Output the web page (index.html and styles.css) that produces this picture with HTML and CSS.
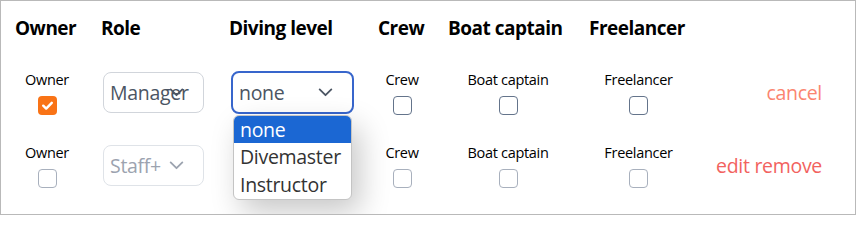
FILE: index.html
```html
<!DOCTYPE html>
<html>
<head>
<meta charset="utf-8">
<link rel="stylesheet" href="styles.css">
</head>
<body>
<div class="frame">
  <div class="grid head">
    <div class="th h1">Owner</div>
    <div class="th h2">Role</div>
    <div class="th h3">Diving level</div>
    <div class="th h4">Crew</div>
    <div class="th h5">Boat captain</div>
    <div class="th h6">Freelancer</div>
    <div></div>
  </div>

  <div class="grid row">
    <div class="stack"><span class="lbl">Owner</span><span class="cb checked"><svg viewBox="0 0 20 20" width="19" height="19"><path d="M5.5 10.2 L8.6 13.2 L14.5 7.2" fill="none" stroke="#fff" stroke-width="2.6" stroke-linecap="round" stroke-linejoin="round"/></svg></span></div>
    <div class="cell"><div class="select role"><span class="val">Manager</span><svg class="chev" viewBox="0 0 16 10" width="15" height="9"><polyline points="1.5,1.5 8,8 14.5,1.5" fill="none" stroke="#4b5563" stroke-width="2" stroke-linecap="round" stroke-linejoin="round"/></svg></div></div>
    <div class="cell">
      <div class="dd-wrap">
        <div class="select level focus"><span class="val">none</span><svg class="chev" viewBox="0 0 16 10" width="15" height="9"><polyline points="1.5,1.5 8,8 14.5,1.5" fill="none" stroke="#4b5563" stroke-width="2" stroke-linecap="round" stroke-linejoin="round"/></svg></div>
        <ul class="popup">
          <li class="opt sel">none</li>
          <li class="opt">Divemaster</li>
          <li class="opt">Instructor</li>
        </ul>
      </div>
    </div>
    <div class="stack"><span class="lbl">Crew</span><span class="cb"></span></div>
    <div class="stack"><span class="lbl">Boat captain</span><span class="cb"></span></div>
    <div class="stack"><span class="lbl">Freelancer</span><span class="cb"></span></div>
    <div class="actions"><span class="cancel">cancel</span></div>
  </div>

  <div class="grid row">
    <div class="stack"><span class="lbl">Owner</span><span class="cb dis"></span></div>
    <div class="cell"><div class="select role disabled"><span class="val">Staff+</span><svg class="chev" viewBox="0 0 16 10" width="15" height="9"><polyline points="1.5,1.5 8,8 14.5,1.5" fill="none" stroke="#9ca3af" stroke-width="2" stroke-linecap="round" stroke-linejoin="round"/></svg></div></div>
    <div class="cell"></div>
    <div class="stack"><span class="lbl">Crew</span><span class="cb dis"></span></div>
    <div class="stack"><span class="lbl">Boat captain</span><span class="cb dis"></span></div>
    <div class="stack"><span class="lbl">Freelancer</span><span class="cb dis"></span></div>
    <div class="actions"><span class="edit">edit remove</span></div>
  </div>
</div>
</body>
</html>
```

FILE: styles.css
```css
* { box-sizing: border-box; }
html, body { margin: 0; padding: 0; background: #fff; }
body {
  font-family: "Open Sans", "Noto Sans", "Liberation Sans", sans-serif;
  color: #000;
  overflow: hidden;
}
.frame {
  width: 856px;
  height: 215px;
  border: 1px solid #b9b9b9;
  overflow: hidden;
  position: relative;
}
.grid {
  display: grid;
  grid-template-columns: 92px 124px 149px 72px 140px 121px 1fr;
  align-items: center;
}
.head { padding-top: 13px; height: 55px; align-items: start; }
.th {
  font-weight: 700;
  font-size: 19px;
  line-height: 28px;
  letter-spacing: -0.5px;
  white-space: nowrap;
}
.h1 { padding-left: 14px; }
.h2 { padding-left: 8px; }
.h3 { padding-left: 12px; }
.h4 { padding-left: 12px; }
.h5 { padding-left: 10px; }
.h6 { padding-left: 11px; }

.row { height: 73px; }
.stack {
  display: flex;
  flex-direction: column;
  align-items: center;
  gap: 6px;
}
.lbl {
  font-size: 14.5px;
  line-height: 20px;
  letter-spacing: -0.3px;
  white-space: nowrap;
}
.cb {
  width: 19px;
  height: 19px;
  border: 1.5px solid #64748b;
  border-radius: 4px;
  background: #fff;
  display: block;
}
.cb.dis { border-color: #a8b0bd; }
.cb.checked {
  border: none;
  background: #f97316;
}
.cb svg { display: block; }

.cell { display: flex; align-items: center; }
.select {
  position: relative;
  display: flex;
  align-items: center;
  border: 1px solid #d1d5db;
  border-radius: 8px;
  background: #fff;
  font-size: 19.5px;
  color: #4b5563;
  letter-spacing: -0.3px;
  white-space: nowrap;
  overflow: hidden;
}
.select.role {
  width: 101px;
  height: 41px;
  margin-left: 10px;
  padding-left: 6px;
}
.select.disabled { color: #9ca3af; border-color: #dfe3e8; }
.select.level {
  width: 123px;
  height: 43px;
  padding-left: 6px;
  border: 2px solid #3866cc;
}
.chev {
  position: absolute;
  right: 19px;
  top: 50%;
  margin-top: -5px;
}
.dd-wrap {
  position: relative;
  margin-left: 14px;
}
.popup {
  position: absolute;
  left: 2px;
  top: 44px;
  width: 119px;
  margin: 0;
  padding: 0;
  list-style: none;
  background: #fff;
  border: 1px solid #c4c4c4;
  border-radius: 6px;
  box-shadow: 8px 12px 30px rgba(0, 0, 0, 0.22);
  overflow: hidden;
  z-index: 5;
}
.opt {
  height: 28px;
  line-height: 28px;
  padding-left: 6px;
  font-size: 19.5px;
  color: #333;
  letter-spacing: -0.3px;
}
.opt.sel { background: #1b67d3; color: #fff; height: 27px; line-height: 27px; }

.actions {
  display: flex;
  justify-content: flex-end;
  padding-right: 33px;
  font-size: 19.5px;
  letter-spacing: -0.3px;
  white-space: nowrap;
}
.cancel { color: #fb8570; }
.edit { color: #f2625e; }
```
